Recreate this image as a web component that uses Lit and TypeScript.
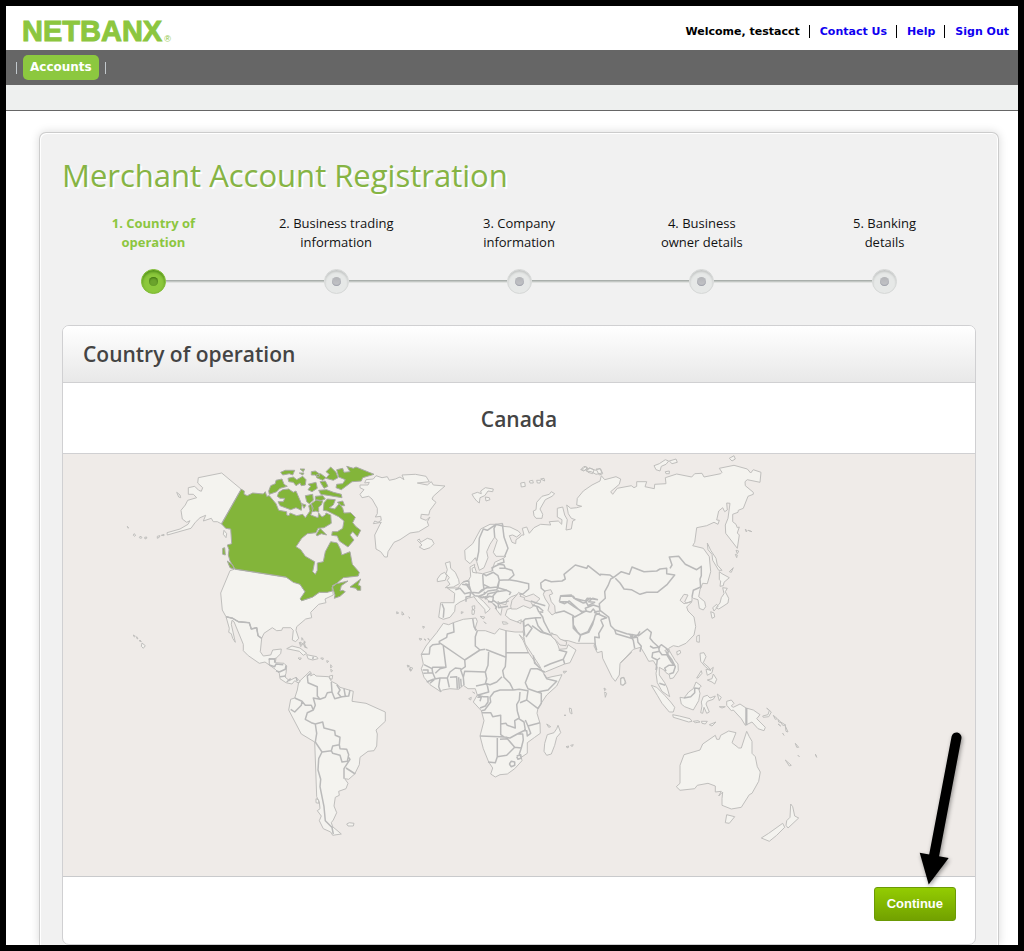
import { LitElement, html, svg, css } from "lit";
import { customElement, state } from "lit/decorators.js";
import { classMap } from "lit/directives/class-map.js";

/* ---------- map data ---------- */

// Every run of points is stored in thirds of a map unit, relative to its sheet's corner.
const SHEETS = {
  N: [120, 455],
  E: [350, 455],
  A: [560, 455],
  F: [400, 600],
  S: [240, 640],
  O: [620, 620],
} as const;
type Sheet = keyof typeof SHEETS;
type Run = [Sheet, string];

const project = ([sheet, points]: Run): string => {
  const [ox, oy] = SHEETS[sheet];
  const n = points.trim().split(/\s+/).map(Number);
  const out: string[] = [];
  for (let i = 0; i + 1 < n.length; i += 2) {
    out.push(`${(ox + n[i] / 3).toFixed(1)} ${(oy + n[i + 1] / 3).toFixed(1)}`);
  }
  return out.join("L");
};
const closed = (...runs: Run[]) => `M${runs.map(project).join("L")}Z`;
const shapes = (sheet: Sheet, list: string[]) => list.map((p) => closed([sheet, p])).join("");
const lines = (sheet: Sheet, list: string[]) => list.map((p) => `M${project([sheet, p])}`).join("");

const EURASIA = closed(
  ["E", "457 205 459 214 480 216 505 228 512 236 500 246 488 240 478 242 486 262 497 266 498 254 510 246 515 240 522 240 517 220 530 216 538 235 552 218 572 208 602 210 598 200 625 198 635 208 636 194 622 186 622 160 638 156 644 180 652 194 648 225 664 222 668 198 676 194 664 190 655 176 650 150 662 160 680 158 695 154 680 150 682 130 700 108 726 90 750 78"],
  ["A", "120 78 124 62 134 74 168 65 182 72 178 88 152 110 158 118 172 100 214 92 222 98 230 94 230 80 260 80 255 95 283 101 284 88 318 86 316 68 350 57 395 66 404 56 426 55 432 66 482 56 486 52 478 40 522 31 562 42 572 54 580 44 603 52 600 82 562 74 555 80 556 92 580 112 580 118 564 124 550 160 535 166 534 172 518 178 518 200 528 208 532 218 538 216 532 234 538 240 532 280 497 235 496 210 504 190 510 145 500 144 502 165 494 170 488 158 476 168 470 195 478 196 474 208 462 202 440 212 410 218 404 262 398 272 414 276 430 280 448 305 452 350 442 386 428 385 420 404 416 425 434 440 437 455 430 465 418 460 414 434 400 430 396 426 396 438 380 444 374 440 384 420 372 418 360 436 372 446 396 440 380 456 384 468 402 486 407 515 402 540 378 565 355 575 340 572 326 580"],
  ["O", "148 92 166 122 174 132 175 152 160 174 150 176 148 164 138 158 132 150 118 142 118 165 134 188 142 204 149 230 126 214 112 188 108 160 112 142 100 122 86 124 74 102 62 82 40 88 2 128"],
  ["F", "695 156 660 190 658 225 646 244 636 232 608 175 606 154 592 158 582 138 584 130 530 130 505 122 480 120 455 98 450 104 466 120 474 136 478 148 500 146 504 134 528 150 510 188 494 192 436 216 428 216 418 196 398 166 376 132 368 100 372 82 372 64 352 66 330 58 316 46 322 28 352 20 378 14 400 16 420 -4 400 -18 378 -10 362 -20 334 -10 320 0 318 14 300 10 294 4 306 26 302 46 290 30 284 14 266 2 248 -12 234 -10 250 4 270 26 268 30 256 40 254 28 232 4 222 -10 206 -6 180 6 166 16 164 34 150 52 130 58 116 52 122 8 162 8 164 -20 142 -36 174 -36 186 -52 206 -60"],
  ["E", "362 364 360 336 374 328 372 352 398 356 426 348 434 322 460 310 468 304 438 304 430 292 442 256 434 246 420 268 410 290 414 308 402 338 388 346 380 320 376 308 360 326 346 314 344 286 368 266 392 222 420 208 438 208"],
);

const AFRICA = closed([
  "F",
  "160 68 146 74 130 70 110 98 92 120 78 138 64 163 70 192 64 206 72 232 90 254 122 275 128 270 150 266 176 268 190 256 204 266 226 266 232 285 220 306 244 332 252 362 240 408 250 446 266 486 278 504 272 522 286 531 300 524 322 522 344 506 366 482 364 472 382 460 382 428 404 412 421 400 420 370 411 340 414 324 440 285 470 258 486 224 456 230 440 234 428 216 408 190 384 156 370 122 358 104 372 118 370 96 345 96 318 92 298 86 284 102 256 92 232 92 226 84 232 64 228 54 190 58",
]);

const NORTH_AMERICA = shapes("N", [
  "305 54 235 68 233 84 248 98 244 109 236 106 224 94 205 98 205 118 220 118 230 128 203 136 196 150 183 166 187 192 200 202 210 197 204 208 180 222 141 233 142 240 213 220 226 202 240 188 257 181 250 198 274 190 280 200 292 200 305 207 322 220 328 222 305 205 364 103",
  "330 347 302 414 307 465 318 485 338 490 355 500 388 503 394 522 410 518 414 542 425 550 432 535 457 518 470 527 485 526 488 518 512 518 520 526 517 555 527 560 536 550 528 526 530 515 557 492 575 488 572 472 596 448 618 443 615 432 640 420 637 402 622 412 598 412 578 426 545 437 555 410 540 388 498 366 345 342",
  "318 485 338 490 355 500 388 503 394 522 410 518 414 542 425 550 421 590 430 603 452 600 458 585 484 582 482 596 468 610 448 613 448 630 435 621 418 625 385 602 370 587 370 568 342 500 336 496 334 508 346 562 338 550 334 536 326 532 328 520",
  "170 112 180 120 182 128 176 126", "42 236 47 240 44 244 40 241", "60 244 66 247 64 250 58 248",
  "74 247 80 246 80 250 75 252", "112 244 120 242 118 247 112 250", "124 241 132 238 132 242",
  "22 214 26 218 24 220", "40 540 46 544 43 546", "50 545 54 552 50 550", "60 555 64 560 58 558",
  "66 564 76 572 70 580 64 574", "312 226 320 236 318 248 310 238", "545 548 550 552 546 556",
  "538 562 545 572 542 575", "552 562 556 572 551 570",
]);

const CANADA = shapes("N", [
  "364 103 373 108 372 118 382 122 398 114 430 117 436 110 440 124 448 122 468 146 476 166 500 170 500 180 507 182 510 174 530 182 548 178 556 188 570 168 566 152 574 146 580 160 572 180 594 188 596 174 606 186 616 180 618 174 632 180 634 205 612 218 594 220 588 233 562 236 545 250 528 275 542 284 556 304 584 320 578 350 586 358 592 346 592 324 610 320 616 290 632 260 652 264 662 284 665 300 690 290 697 328 718 352 715 363 670 368 650 385 637 392 640 404 645 420 643 430 660 424 676 410 668 406 660 408 664 392 684 378 650 386 636 396 637 408 622 412 598 412 578 426 545 437 540 432 555 410 540 388 520 382 498 366 345 342 330 318 325 300 327 284 322 270 335 266 332 222 317 220 305 207",
  "612 143 622 132 646 134 640 150 628 158 644 162 658 146 668 160 672 174 692 173 706 187 698 203 708 215 722 226 712 245 698 230 690 240 702 255 684 276 658 258 652 243 635 241 637 230 652 230 668 220 672 198 656 185 640 177 622 168 610 166",
  "574 146 590 134 608 138 604 150 596 156 596 172 588 168 578 170",
  "322 318 338 330 342 342 330 338", "308 280 314 278 316 300 308 298",
  "722 372 690 396 708 400 712 406 722 406 722 394 714 390",
  "588 240 600 220 620 240 604 236 592 242",
  "446 108 452 92 466 86 468 76 486 72 492 88 502 94 480 100 470 110 448 118",
  "476 112 488 104 506 102 520 112 528 108 546 150 544 166 528 158 512 164 480 152 474 140 490 140 494 130 480 130 472 124",
  "482 52 496 46 524 46 518 60 508 56 488 60", "504 70 520 66 530 74 548 64 558 74 556 90 544 92 540 84 528 92 520 82 506 80",
  "540 42 554 42 550 50", "538 54 552 54 548 60", "574 50 586 48 600 58 596 66 584 60 574 60", "588 60 602 56 618 68 608 76 590 68",
  "564 88 588 82 592 100 576 110 564 104 572 94", "600 80 616 78 624 94 612 100", "618 50 632 36 648 52 654 68 640 76 618 70 628 58",
  "650 44 668 40 672 52 690 50 680 34 700 40 708 36 762 58 728 68 724 78 696 80 680 92 664 104 648 98 650 88 668 86 676 74 656 66",
  "596 106 620 104 640 112 664 118 666 128 630 122 602 118", "556 122 578 118 580 136 568 146 560 140", "586 124 608 122 616 132 600 138 586 134",
  "546 146 558 150 552 160", "652 142 668 138 674 152 664 152",
]);

const GREENLAND = shapes("E", [
  "48 74 70 72 78 62 96 68 112 65 118 76 136 72 150 66 162 74 156 60 196 58 228 64 238 80 202 84 232 90 244 80 250 90 285 93 270 106 250 124 246 132 258 142 240 166 236 180 214 178 212 190 228 196 240 186 232 200 236 212 206 230 180 234 150 254 132 262 114 290 112 306 104 306 92 290 78 282 74 240 90 208 94 202 70 206 74 198 84 202 94 196 92 184 76 186 82 176 82 160 66 132 56 124 36 128 30 118 42 104 30 98 30 90 54 90 58 82 44 84",
  "202 256 208 252 212 262 232 250 246 254 252 266 240 278 222 284 208 276 216 270",
]);

const SOUTH_AMERICA = shapes("S", [
  "88 75 88 58 108 55 106 68 132 70 140 78 138 100 134 110 148 122 168 112 180 124 176 130 164 122 156 132 138 128 120 116 118 100 106 88",
  "176 126 210 94 214 100 212 108 222 102 228 108 266 110 274 124 290 132 300 142 340 154 336 184 378 190 436 216 436 244 408 270 412 282 410 318 402 332 384 334 360 352 358 374 344 402 326 418 314 416 324 430 318 446 296 454 298 466 286 472 282 498 290 518 280 540 274 548 278 560 304 582 278 586 272 576 250 566 238 542 244 528 232 512 240 506 238 486 230 470 224 306 184 282 146 210 152 178 164 174 172 150",
  "140 26 156 18 180 24 200 40 190 46 178 34", "200 44 230 50 234 56 218 60 204 56", "174 54 184 54 180 60", "242 54 250 54 248 60",
  "320 552 328 548 342 550 340 558 324 558", "268 108 278 106 276 118 270 116", "502 76 508 78 504 82", "510 82 518 84 512 94", "180 6 190 12 184 14", "192 2 196 6 194 10", "192 16 202 24 194 22",
  "272 74 276 80 272 84", "272 88 278 92 274 96", "260 62 266 64 262 68", "228 476 236 480 236 490 228 488",
]);

const ISLANDS =
  shapes("E", [
    "286 324 300 320 302 340 316 352 326 374 328 386 310 396 286 398 300 388 292 376 298 368 288 356 292 344",
    "262 372 272 358 284 352 290 362 286 376 262 380", "512 84 524 82 526 94 514 96", "538 78 548 76 550 84 540 84", "560 76 572 76 570 84 562 84", "572 72 582 70 584 78",
    "550 168 558 164 560 142 576 124 598 118 604 110 614 116 606 124 586 134 570 162 578 178 576 190 558 190 552 182",
    "366 118 382 112 394 116 392 108 406 98 430 102 428 110 414 108 404 122 390 128 388 144 380 138 372 128", "406 126 418 128 420 134 408 138",
    "692 44 702 34 712 38 704 46", "708 48 718 38 736 46 750 40 756 54 738 58 724 50",
    "140 470 146 474 140 476", "156 470 162 478 156 480", "176 486 180 490", "218 514 224 516 220 520", "208 550 216 552 210 556", "222 552 228 556", "234 550 238 556",
    "366 454 374 452 374 462 368 464", "366 464 374 466 372 478 366 478", "334 470 340 472 334 476", "390 484 404 486 400 492", "402 500 408 506", "457 500 470 502 474 506 460 508", "502 500 514 494 512 506", "366 340 374 336 380 354 368 352",
  ]) +
  shapes("A", [
    "282 32 298 26 316 14 326 18 318 28 304 34 300 48 288 44", "328 18 348 12 352 22 336 26", "316 50 328 48 328 56 318 56", "508 10 522 2 526 12 516 18",
    "64 44 78 34 84 42 70 48", "80 46 90 40 102 44 98 56 84 52", "108 42 122 42 128 56 118 60",
    "442 264 452 286 468 310 472 330 486 346 476 346 458 316 456 298 444 284", "478 350 486 356 508 368 492 382 490 392 480 394 482 378 478 374",
    "488 398 502 400 496 410 506 430 504 444 486 456 476 462 468 458 480 444 484 428 492 416", "458 458 470 448 474 454 462 468", "452 470 462 474 464 486 456 490",
    "508 350 520 338 514 352", "526 298 532 300 530 308", "528 286 536 288 532 296", "556 222 562 228 558 230", "564 226 576 230", "410 544 418 540 418 562 410 560", "350 590 360 586 362 594 352 600",
  ]) +
  shapes("O", [
    "94 196 110 202 134 226 152 246 164 262 160 276 148 276 126 250 112 226", "2 174 10 172 16 186 10 196 2 194",
    "158 284 178 288 210 296 216 304 206 306 180 298 160 292", "220 304 234 302 240 306 226 308", "244 304 262 304 256 312 246 310", "268 314 288 306 276 318",
    "180 232 192 234 206 216 220 206 228 186 244 198 236 206 240 220 236 242 220 270 194 260 184 252",
    "250 230 262 226 270 234 286 228 280 238 262 244 258 252 268 276 260 280 252 262 248 280 242 278 246 258 244 246",
    "240 100 252 98 258 110 250 128 268 144 272 152 256 140 242 124", "258 148 270 150 280 142 276 158 262 166", "262 180 276 176 280 162 290 178 284 192 276 186",
    "230 174 244 152 246 160 234 174", "292 222 304 232 298 242", "298 260 316 260 306 264",
    "320 244 334 240 342 250 334 258 340 262 360 252 378 264 400 270 420 284 410 296 436 322 432 332 414 326 396 306 376 316 364 296 340 270 334 272 320 256",
    "428 288 444 284 448 272 440 264 454 276 446 290 430 292", "460 286 472 296 466 298", "474 298 484 308 476 306", "482 306 498 316 488 316", "496 318 504 336 498 334", "474 312 482 318", "488 340 492 346",
    "526 370 536 382 530 382", "496 420 514 436 508 438", "534 406 538 410", "586 402 590 412",
    "302 346 326 333 348 338 336 368 356 384 364 384 380 334 388 350 396 364 396 400 406 410 412 440 421 456 416 484 396 520 388 524 364 562 334 567 306 556 306 536 308 516 296 528 304 514 286 516 286 498 264 490 232 496 224 506 180 511 169 500 180 490 180 436 192 404 240 390 248 372 286 346 290 358 298 358",
    "320 584 344 590 328 610 316 608", "512 552 518 560 524 588 536 594 504 624 498 616 500 602 510 592",
    "424 654 446 640 488 610 494 622 470 646 448 664",
  ]) +
  shapes("F", [
    "474 376 482 398 470 412 464 436 454 462 440 466 432 454 434 430 442 404 462 398 470 386", "662 236 672 232 678 250 668 256 662 250",
    "490 214 500 214 492 220", "440 372 452 380 446 382", "508 324 514 326 516 342 510 338", "492 346 498 346", "498 440 506 438 504 444", "512 436 520 434 516 440",
    "612 264 618 268 614 272", "614 276 620 280 616 292", "22 196 28 198 24 200", "28 206 34 210 30 212", "206 296 214 292 212 300", "218 276 224 280",
  ]);

// Inland water and bays that sit on top of the continent shapes.
const WATER =
  shapes("E", [
    "482 454 486 436 500 420 506 412 514 418 510 424 524 428 522 434 542 440 550 454 540 460 520 452 500 462 484 462",
    "584 408 602 404 608 416 598 420 604 440 614 452 616 474 606 480 594 466 598 450 586 432 580 418",
    "602 536 620 540 630 552 650 560 648 572 630 570 618 556 606 546",
  ]) + shapes("O", ["148 92 144 86 134 92 146 100"]);

const BORDERS =
  lines("E", [
    "438 208 412 226 400 222 388 250 386 290 380 318", "438 208 432 220 434 246", "457 205 462 246 474 280 464 304", "436 208 456 212",
    "460 310 462 322 442 328", "428 348 426 338 448 328 462 330 466 340", "400 356 408 362 430 352 444 362 448 376 442 396 420 398 400 388 398 358", "448 340 466 340 486 346 492 360 476 374 448 376", "448 376 444 398 470 406 482 412 478 420", "476 374 500 378 536 386 536 402 520 416 508 418",
    "356 376 358 392 364 412 386 414 402 404 400 388", "336 388 350 390 360 404", "340 380 354 378", "346 386 356 390", "316 404 330 400 344 416 362 412 360 424 348 426 348 440", "364 412 374 422 386 424 402 418 404 410", "386 414 394 406 410 398 420 398", "402 418 414 408 440 404 444 398", "412 424 414 416 436 412 446 406", "404 432 418 424 430 426 428 440 414 440", "428 424 440 410 472 406", "430 436 444 446 476 438", "444 446 446 458 474 454", "430 446 440 456 436 462", "276 446 282 462 280 488", "386 424 396 428 412 424",
    "542 438 566 446 586 452", "548 450 566 456 580 468", "560 456 566 470 580 472", "586 410 574 400 572 384 586 374 604 380 636 378 646 372 642 358 676 330 710 340 714 332 752 362",
    "628 440 632 422 664 420 672 430 706 438 712 430 744 434", "628 440 644 446 658 438 678 456 694 470 708 468", "616 474 642 468 670 482 674 486 700 472 708 468 722 472",
    "518 500 526 492 558 488 574 488", "556 488 564 512 580 532 602 540", "524 514 534 508 546 520 528 546", "546 512 574 532 602 540", "520 500 524 542", "568 472 578 486 582 500 600 534", "670 484 670 510 682 530 692 540 686 560", "692 540 716 532 728 508 736 480 750 474",
  ]) +
  lines("A", [
    "120 358 150 360 160 368 152 372 144 392 134 410 136 430 118 446 120 466", "160 368 184 350 208 358 216 336 252 350 290 348 300 342 320 340 320 356 344 360 322 388 292 412 260 412 240 418 214 404 192 402 180 384 166 370",
    "330 340 336 330 328 306 356 304 376 328 410 344 424 334 424 362 420 372 422 398", "396 426 400 406 422 396", "114 434 98 430 86 440 104 442 84 452 78 440 92 428", "80 470 76 460 100 450 118 456 120 468 106 470 100 462 92 472", "120 466 146 486 152 512 164 524 200 536 236 542 262 522 274 532 270 550 280 562 300 580",
    "164 524 168 536 214 550 232 546", "122 494 130 512 116 536 118 548 104 546 106 570 110 586", "210 540 220 556 224 580", "232 546 234 562 244 574 240 590", "102 472 140 488 122 494", "38 484 40 520 50 530 60 540 84 530 104 490", "0 424 40 424 46 432 70 444 80 442", "0 440 20 440 44 456 70 472",
  ]) +
  lines("O", [
    "60 34 54 44 38 54 36 42", "90 78 100 84 116 82 118 94 98 98 96 112 112 120 108 150", "116 82 124 74 138 84 146 96", "118 94 126 104 140 104 154 126 162 136 146 136 134 144 138 154", "120 114 112 120", "138 96 156 120 166 140 160 158 148 162", "118 190 136 196", "192 234 212 230 224 218 224 204 240 206", "378 264 378 316", "380 264 380 316",
  ]) +
  lines("F", [
    "160 68 162 96 142 102 140 112 118 124 118 132 98 134 90 142 88 162 64 163", "118 128 194 180 240 150 256 148", "194 180 196 200 182 210 190 232", "130 138 138 202 98 202 96 208", "232 92 226 110 226 138 240 150", "218 56 222 80 228 92", "318 92 318 172 262 150 258 148", "320 158 386 158", "318 172 316 200 308 212 312 232 330 250 340 270", "266 152 264 196 256 216 194 214 190 232", "256 216 260 236 256 252 228 258", "262 256 256 250 270 254 290 246 306 230", "262 256 266 276 232 286", "72 194 96 206 98 218 70 220", "68 210 84 210 84 220", "98 218 106 236 90 250", "80 246 100 238 120 234 142 234 148 262", "120 234 116 260 122 275", "142 234 150 216 166 204 184 206", "150 232 170 230 172 266", "176 232 178 266", "182 236 184 260", "190 232 192 256", "106 220 120 206 138 202",
    "392 206 376 248 384 266 412 276 444 270 470 244 440 236 432 222", "392 206 412 206 434 216", "340 270 300 270 282 276 270 292 272 306 254 330 244 332", "232 286 250 290 264 290 264 306 256 318 240 324", "232 292 244 292 240 304", "340 270 358 268 384 272 380 300 360 308", "360 276 358 300 350 314 352 334", "412 276 424 280 424 310 414 326", "380 300 414 326", "352 334 358 354 344 362 346 384 322 376 318 370 302 372 302 346 278 350 272 338 246 338", "302 372 302 404 314 412 330 414 352 402 376 390 372 366 356 356", "376 360 384 378 420 368", "384 378 392 400 382 408 380 392 372 390", "240 408 300 410 322 412", "292 414 292 470 286 488 264 486", "292 470 320 466 344 442 322 416 300 418", "344 442 364 444 370 420 368 402 352 402", "364 444 358 462 364 472", "350 468 362 464 364 474 354 478 350 470", "328 492 334 484 344 486 344 496 334 500 328 492",
    "432 200 450 192 490 178 494 192", "490 178 500 156 476 150", "400 166 404 190 420 204",
  ]) +
  lines("N", [
    "318 485 338 490 355 500 388 503 394 522 410 518 414 542 425 550", "305 207 364 103", "345 342 498 366",
  ]) +
  lines("S", [
    "88 60 88 56 104 58 104 68", "88 75 104 80 108 72 130 74", "108 92 118 96 136 88 138 76", "120 110 138 108", "140 126 152 116", "168 112 172 124",
    "212 100 202 108 204 128 232 140 232 168 240 178 256 172 262 158 276 156 274 126", "164 174 186 184 196 196 214 196 220 210 226 196 220 174 240 178", "152 208 164 216 184 196 186 184", "220 210 202 218 196 238 214 248 226 252 248 246 252 264 284 272 286 286 300 292 298 314 278 318 274 332 246 336 226 306 230 280 226 252", "276 156 284 176 306 170 326 168 330 150", "290 134 300 150 294 160 304 172", "312 146 316 168", "274 332 278 340 300 346 306 366 322 364 326 344 320 328 300 326 298 314", "326 352 330 358 312 386 312 416", "318 384 346 402", "246 336 236 356 234 390 242 418 240 440 252 500 256 542 274 560 278 562", "220 50 218 58", "276 562 280 582",
  ]);

/* ---------- elements ---------- */

@customElement("country-map")
export class CountryMap extends LitElement {
  static styles = css`
    :host {
      display: block;
      background: #efebe8;
    }
    .map {
      display: block;
      width: 100%;
      height: auto;
    }
    .land {
      fill: #f4f3ef;
      stroke: #c0bfbd;
      stroke-width: 1;
      stroke-linejoin: round;
    }
    .selected {
      fill: #83b53a;
      stroke: #a9aba4;
    }
    .water {
      fill: #efebe8;
      stroke: #c0bfbd;
      stroke-width: 1;
    }
    .border {
      fill: none;
      stroke: #bababa;
      stroke-width: 1.5;
      stroke-linejoin: round;
    }
  `;

  render() {
    const land = [EURASIA, AFRICA, NORTH_AMERICA, GREENLAND, SOUTH_AMERICA, ISLANDS];
    return html`
      <svg class="map" viewBox="63 454 912 422" role="img" aria-label="World map">
        ${land.map((d) => svg`<path class="land" d=${d} />`)}
        <path class="water" d=${WATER} />
        <path class="border" d=${BORDERS} />
        <path class="land selected" d=${CANADA} />
      </svg>
    `;
  }
}

@customElement("step-track")
export class StepTrack extends LitElement {
  @state() private current = 0;

  private steps = [
    ["1. Country of", "operation"],
    ["2. Business trading", "information"],
    ["3. Company", "information"],
    ["4. Business", "owner details"],
    ["5. Banking", "details"],
  ];

  static styles = css`
    :host {
      display: block;
    }
    .steps {
      display: grid;
      grid-template-columns: repeat(5, 1fr);
      margin: 0;
      padding: 0;
      list-style: none;
      font: 13px/19px "Open Sans", "Noto Sans", sans-serif;
      color: #111;
      text-align: center;
    }
    .step {
      display: flex;
      flex-direction: column;
      gap: 17px;
    }
    .label span {
      display: block;
    }
    .current .label {
      color: #8cc63f;
      font-weight: 700;
    }
    .marker {
      display: flex;
      align-items: center;
    }
    .marker::before,
    .marker::after {
      content: "";
      flex: 1;
      height: 1px;
      border-top: 1px solid #a9afab;
      border-bottom: 1px solid #e0e2e0;
      background: #c3c7c4;
    }
    .step:first-child .marker::before,
    .step:last-child .marker::after {
      visibility: hidden;
    }
    .dot {
      display: flex;
      align-items: center;
      justify-content: center;
      box-sizing: border-box;
      width: 25px;
      height: 25px;
      border: 1px solid #d6d8d7;
      border-radius: 50%;
      background: #e6e8e7;
      box-shadow: inset 0 2px 2px #c6c8c7;
    }
    .dot::before {
      content: "";
      width: 9px;
      height: 9px;
      border-radius: 50%;
      background: linear-gradient(#b4b5b8, #c3c4c8);
      box-shadow: inset 0 -1px 1px #9fa2ab;
    }
    .current .dot {
      border-color: #80bb36;
      background: #8cc83c;
      box-shadow: inset 0 2px 3px #508e19;
    }
    .current .dot::before {
      background: #6ba32c;
      box-shadow: inset 0 1px 2px #3f7410;
    }
  `;

  render() {
    return html`
      <ol class="steps">
        ${this.steps.map(
          (lines, i) => html`
            <li
              class=${classMap({ step: true, current: i === this.current })}
              aria-current=${i === this.current ? "step" : "false"}
            >
              <div class="label">${lines.map((l) => html`<span>${l}</span>`)}</div>
              <div class="marker"><span class="dot"></span></div>
            </li>
          `,
        )}
      </ol>
    `;
  }
}

@customElement("app-root")
export class AppRoot extends LitElement {
  static styles = css`
    :host {
      display: block;
      box-sizing: border-box;
      min-height: 100vh;
      border: 6px solid #000;
      background: #fff;
      overflow: hidden;
      font-family: "DejaVu Sans", Verdana, sans-serif;
      color: #000;
    }
    .top {
      display: flex;
      align-items: center;
      justify-content: space-between;
      height: 44px;
      padding: 0 9px 0 16px;
    }
    .logo {
      display: flex;
      align-items: flex-end;
      padding-top: 6px;
      color: #8cc63f;
      font: 700 29px/30px "Liberation Sans", Arial, sans-serif;
      -webkit-text-stroke: 1px #8cc63f;
    }
    .reg {
      font-size: 9px;
      line-height: 14px;
      -webkit-text-stroke: 0;
      font-weight: 400;
      padding-left: 2px;
    }
    .user {
      display: flex;
      align-items: center;
      padding-top: 6px;
      font-size: 11px;
      line-height: 13px;
      font-weight: 700;
    }
    .user > * + * {
      margin-left: 9px;
      padding-left: 10px;
      border-left: 1px solid #000;
    }
    .user a {
      color: #0f00f0;
      text-decoration: none;
    }
    .nav {
      display: flex;
      align-items: center;
      gap: 6px;
      height: 35px;
      padding: 0 10px;
      background: #666;
    }
    .tick {
      width: 1px;
      height: 12px;
      background: #c2c8cc;
    }
    .tab {
      padding: 0 7px;
      border-radius: 5px;
      background: #8cc83f;
      color: #fff;
      font-size: 12px;
      line-height: 25px;
      font-weight: 700;
      text-decoration: none;
    }
    .subnav {
      height: 25px;
      background: #eef0ef;
      border-bottom: 1px solid #666;
    }
    .main {
      padding: 21px 19px 0 33px;
    }
    .card {
      padding: 22px 22px 0;
      border: 1px solid #ccc;
      border-bottom: 0;
      border-radius: 7px 7px 0 0;
      background: #f1f1f1;
      box-shadow: 0 0 10px #d9d9d9, inset 1px 1px 0 #fff, inset -1px 0 0 #fff;
    }
    .title {
      margin: 0 0 19px;
      color: #86b444;
      font: 400 31px/40px "Open Sans", "Trebuchet MS", sans-serif;
      text-shadow: 2px 2px 1px #fff;
    }
    .panel {
      margin-top: 31px;
      border: 1px solid #d0d0d2;
      border-radius: 7px;
      background: #fff;
    }
    .panel-title,
    .country {
      margin: 0;
      border-bottom: 1px solid #d0d0d2;
      color: #444;
      font: 600 21px/56px "Open Sans", "Trebuchet MS", sans-serif;
    }
    .panel-title {
      padding: 0 20px;
      border-radius: 6px 6px 0 0;
      background: linear-gradient(#fff, #e8e8e8);
    }
    .country {
      padding: 8px 0 6px;
      text-align: center;
    }
    .actions {
      position: relative;
      display: flex;
      justify-content: flex-end;
      padding: 10px 19px 23px;
      border-top: 1px solid #c9cacc;
    }
    .continue {
      box-sizing: border-box;
      height: 34px;
      padding: 0 12px;
      border: 1px solid #6b9a05;
      border-radius: 3px;
      background: linear-gradient(#93cc02, #72a100);
      color: #fff;
      font: 700 13px/30px "Liberation Sans", Arial, sans-serif;
      cursor: pointer;
    }
    .pointer {
      position: absolute;
      top: -147px;
      right: 11px;
      width: 50px;
      height: 160px;
      pointer-events: none;
      filter: drop-shadow(1px 2px 2px rgba(0, 0, 0, 0.4));
    }
  `;

  render() {
    return html`
      <header class="top">
        <div class="logo">NETBANX<span class="reg">®</span></div>
        <div class="user">
          <span>Welcome, testacct</span>
          <a href="#contact">Contact Us</a>
          <a href="#help">Help</a>
          <a href="#signout">Sign Out</a>
        </div>
      </header>
      <nav class="nav">
        <span class="tick"></span>
        <a class="tab" href="#accounts">Accounts</a>
        <span class="tick"></span>
      </nav>
      <div class="subnav"></div>
      <main class="main">
        <div class="card">
          <h1 class="title">Merchant Account Registration</h1>
          <step-track></step-track>
          <section class="panel">
            <h2 class="panel-title">Country of operation</h2>
            <h3 class="country">Canada</h3>
            <country-map></country-map>
            <div class="actions">
              <button class="continue" type="button">Continue</button>
              <svg class="pointer" viewBox="914 730 50 160" aria-hidden="true">
                <path d="M956.5 737.5L934 856" stroke="#000" stroke-width="10" stroke-linecap="round" />
                <path d="M919.7 852.7L948.7 858L928.7 884.5Z" />
              </svg>
            </div>
          </section>
        </div>
      </main>
    `;
  }
}
